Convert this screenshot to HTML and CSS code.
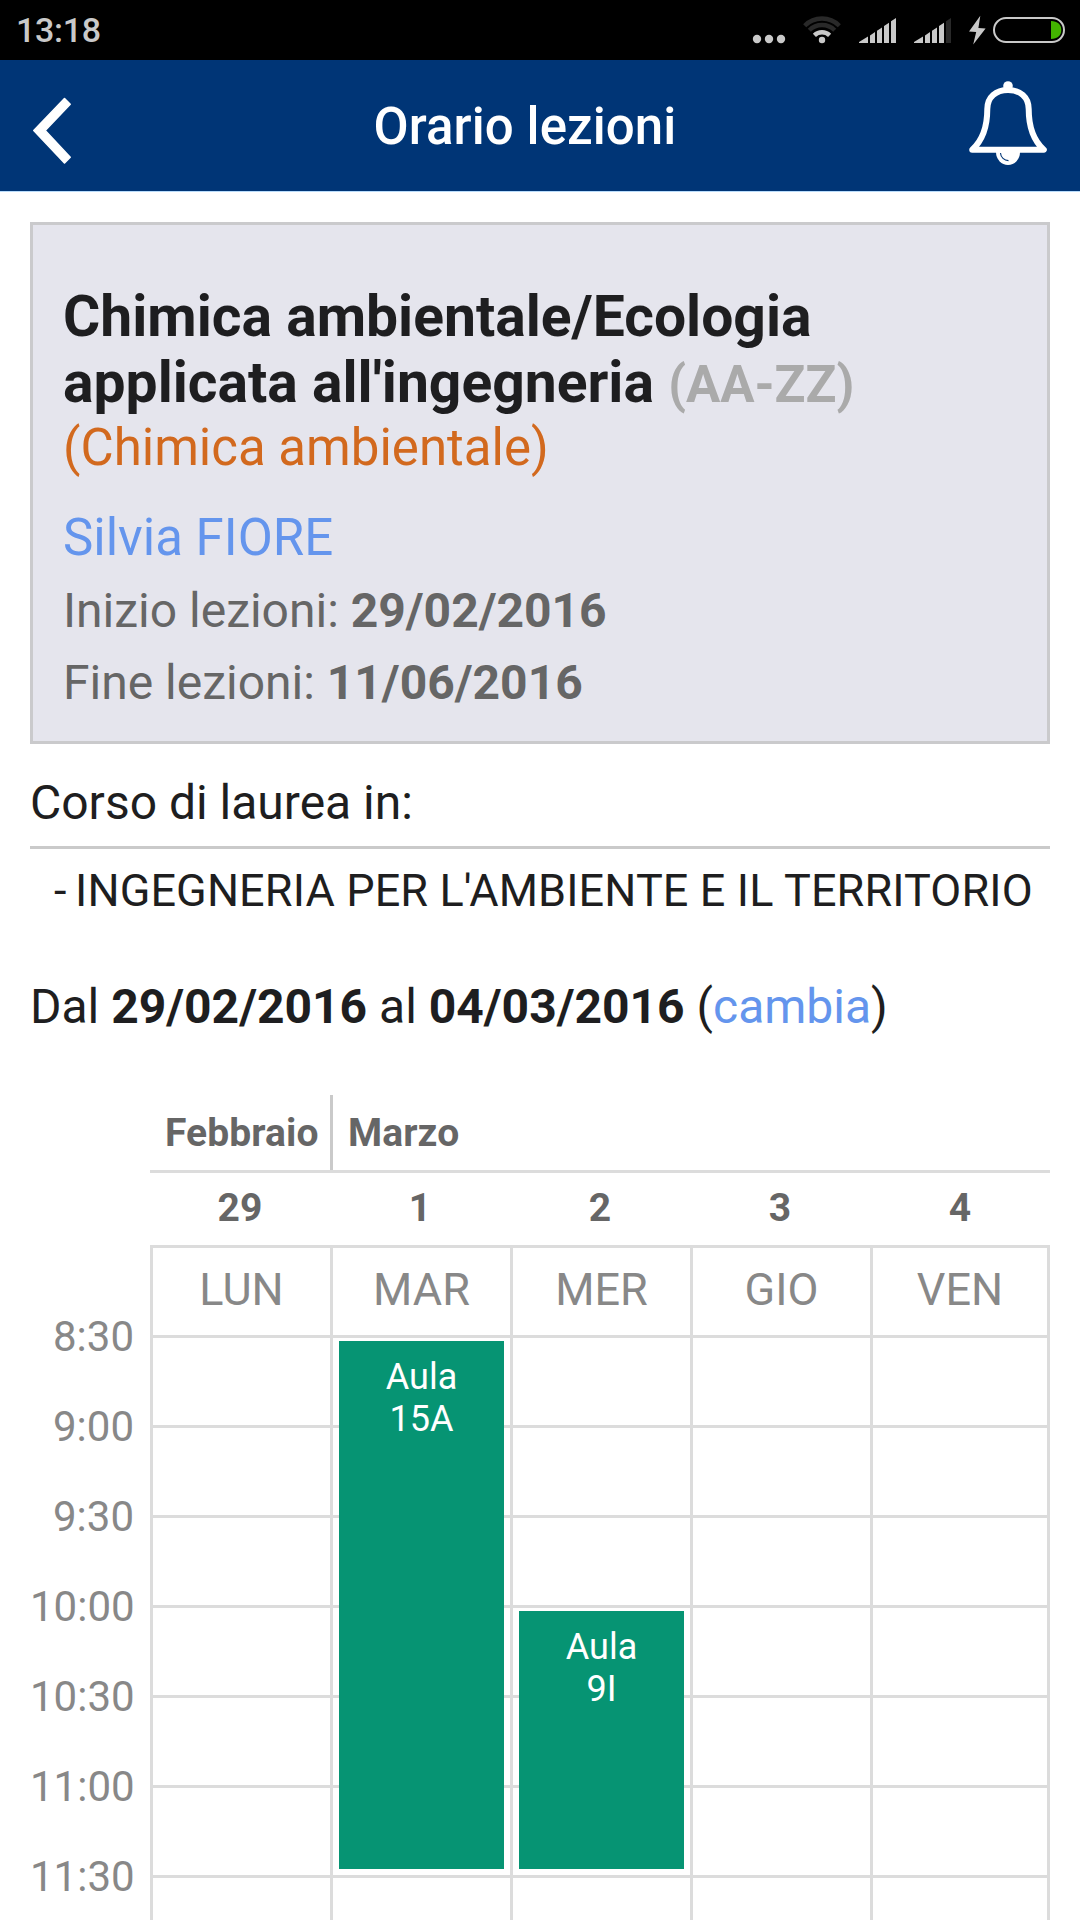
FILE: index.html
```html
<!DOCTYPE html>
<html lang="it">
<head>
<meta charset="utf-8">
<title>Orario lezioni</title>
<link rel="stylesheet" href="styles.css">
</head>
<body>
<div class="status-bar">
  <span class="clock">13:18</span>
  <svg class="status-icons" width="330" height="60" viewBox="750 0 330 60" aria-hidden="true">
    <g fill="#c9c9c9">
      <circle cx="757" cy="39" r="4.2"/><circle cx="769" cy="39" r="4.2"/><circle cx="781" cy="39" r="4.2"/>
      <circle cx="822" cy="40" r="3.2"/>
      <path d="M859 43v-1l9-5.5V43zM870 43v-7.6l5-3.4v11zM877 43V30.8l5-3.4V43zM884 43V26l5-3.3V43zM891 43V21.3l5-3.3v25z"/>
      <path d="M914 43v-1l9-5.5V43zM925 43v-7.6l5-3.4v11zM932 43V30.8l5-3.4V43zM939 43V26l5-3.3V43z"/>
      <path d="M980.3 15.7 969 31.5l7.2.6-3 12.4 12.4-16-7.2-.6z"/>
    </g>
    <path fill="#292929" d="M946 43V21.3l5-3.3v25z"/>
    <g fill="none" stroke-width="4.4">
      <path stroke="#c9c9c9" d="M814.4 35.4a10.8 10.8 0 0 1 15.2 0"/>
      <path stroke="#292929" d="M809.3 30.3a18 18 0 0 1 25.4 0M804.7 25.7a24.5 24.5 0 0 1 34.6 0"/>
    </g>
    <rect x="994" y="18" width="70" height="24" rx="12" fill="none" stroke="#c9c9c9" stroke-width="2"/>
    <path fill="#43b400" d="M1051 21c6.500 0 10.300 3.700 10.300 9s-3.800 9-10.300 9z"/>
  </svg>
</div>

<header class="app-bar">
  <a class="back" aria-label="Indietro">
    <svg width="135" height="131" viewBox="0 60 135 131">
      <path d="M64.500 98.500 33.800 130.500l30.700 32.500 5.700-5.700L45.200 130.500 70.200 104.200z" fill="#fff" stroke="#fff" stroke-width="1.600" stroke-linejoin="round"/>
    </svg>
  </a>
  <h1 class="title">Orario lezioni</h1>
  <a class="alerts" aria-label="Avvisi">
    <svg width="165" height="131" viewBox="915 60 165 131">
      <circle cx="1008" cy="86" r="4.800" fill="#fff"/>
      <path d="M972.200 149.700C983 140 987.300 126 987.300 109C987.300 97 996 90 1008 90S1028.700 97 1028.700 109C1028.700 126 1033 140 1043.800 149.700Z" fill="none" stroke="#fff" stroke-width="6" stroke-linejoin="round"/>
      <path d="M996 152a12 13 0 0 0 24 0z" fill="#fff"/>
      <path d="M1000.500 153a8 8 0 0 0 8 7.600" fill="none" stroke="#003576" stroke-width="1.100"/>
    </svg>
  </a>
</header>

<main class="content">
  <section class="course">
    <h2 class="course-name">Chimica ambientale/Ecologia applicata all'ingegneria <span class="range">(AA-ZZ)</span></h2>
    <p class="course-alias">(Chimica ambientale)</p>
    <p class="teacher">Silvia FIORE</p>
    <p class="period">Inizio lezioni: <b>29/02/2016</b></p>
    <p class="period">Fine lezioni: <b>11/06/2016</b></p>
  </section>

  <h3 class="degree-label">Corso di laurea in:</h3>
  <p class="degree"><span class="dash">-</span>INGEGNERIA PER L'AMBIENTE E IL TERRITORIO</p>

  <p class="week">Dal <b>29/02/2016</b> al <b>04/03/2016</b> (<a class="change">cambia</a>)</p>

  <section class="schedule">
    <div class="times">
      <span>8:30</span><span>9:00</span><span>9:30</span><span>10:00</span><span>10:30</span><span>11:00</span><span>11:30</span>
    </div>
    <div class="calendar">
      <div class="months"><span class="month">Febbraio</span><span class="month next">Marzo</span></div>
      <div class="dates"><span>29</span><span>1</span><span>2</span><span>3</span><span>4</span></div>
      <div class="grid">
        <div class="day lun">LUN</div><div class="day mar">MAR</div><div class="day mer">MER</div><div class="day gio">GIO</div><div class="day ven">VEN</div>
        <div class="line r1"></div><div class="line r2"></div><div class="line r3"></div><div class="line r4"></div><div class="line r5"></div><div class="line r6"></div><div class="line r7"></div>
        <div class="lesson tuesday">Aula<br>15A</div>
        <div class="lesson wednesday">Aula<br>9I</div>
      </div>
    </div>
  </section>
</main>
</body>
</html>
```
FILE: styles.css
```css
* { box-sizing: border-box; margin: 0; padding: 0; }

body {
  width: 1080px;
  height: 1920px;
  overflow: hidden;
  background: #fff;
  color: #1e1e20;
  font-family: Roboto, "Liberation Sans", sans-serif;
}

svg { display: block; }

.status-bar {
  display: flex;
  justify-content: space-between;
  height: 60px;
  padding-left: 16px;
  background: #000;
}
.clock {
  padding-top: 10px;
  color: #c9c9c9;
  font-size: 34px;
  font-weight: 500;
  line-height: 40px;
  letter-spacing: -0.3px;
}

.app-bar {
  display: flex;
  height: 132px;
  background: #003576;
  border-bottom: 1px solid #b9dcfb;
}
.title {
  flex: 1;
  padding-top: 37px;
  color: #fff;
  font-size: 51px;
  font-weight: 500;
  line-height: 59px;
  letter-spacing: 0.08px;
  text-align: center;
  white-space: nowrap;
}

.content { padding: 30px 30px 0; }

.course {
  height: 522px;
  padding: 59px 30px 22px;
  background: #e5e5ed;
  border: 3px solid #cacacc;
}
.course-name { font-size: 57px; font-weight: 700; line-height: 66px; }
.range { color: #aaa; font-size: 51px; line-height: 1; }
.course-alias { margin-top: 2px; color: #d2691e; font-size: 51px; line-height: 60px; }
.teacher { margin: 30px 0 7px; color: #6495ed; font-size: 51px; line-height: 60px; }
.period { color: #666; font-size: 48px; line-height: 72px; }

.degree-label {
  margin-top: 30px;
  padding-bottom: 15px;
  border-bottom: 3px solid #cacaca;
  font-size: 48px;
  font-weight: 400;
  line-height: 57px;
}
.degree {
  display: flex;
  gap: 8.5px;
  margin-top: 15px;
  padding-left: 24px;
  font-size: 45px;
  line-height: 54px;
  letter-spacing: 0.12px;
  white-space: nowrap;
}
.week { margin-top: 60px; font-size: 48px; line-height: 57px; }
.change { color: #6495ed; }

.schedule { display: flex; margin-top: 60px; }
.times {
  display: flex;
  flex-direction: column;
  width: 120px;
  padding: 197px 16px 0 0;
  color: #888;
  font-size: 42px;
  line-height: 90px;
  text-align: right;
}
.calendar { width: 900px; }
.months {
  display: flex;
  height: 78px;
  border-bottom: 3px solid #dcdcdc;
}
.month {
  width: 180px;
  padding: 15px 0 0 15px;
  color: #666;
  font-size: 39px;
  font-weight: 700;
  line-height: 46px;
  letter-spacing: 0.1px;
}
.next { flex: 1; border-left: 3px solid #cacaca; }
.dates {
  display: grid;
  grid-template-columns: repeat(5, 180px);
  height: 72px;
  color: #666;
  font-size: 39px;
  font-weight: 700;
  line-height: 70px;
  text-align: center;
}

.grid {
  display: grid;
  grid-template-columns: repeat(5, 180px);
  grid-template-rows: repeat(8, 90px);
}
.day {
  grid-row: 1 / 9;
  border: solid #dcdcdc;
  border-width: 3px 0 0 3px;
  color: #888;
  font-size: 45px;
  line-height: 83px;
  text-align: center;
}
.lun { grid-column: 1; }
.mar { grid-column: 2; }
.mer { grid-column: 3; }
.gio { grid-column: 4; }
.ven { grid-column: 5; border-right-width: 3px; }
.line { grid-column: 1 / 6; border-top: 3px solid #dcdcdc; }
.r1 { grid-row: 2; }
.r2 { grid-row: 3; }
.r3 { grid-row: 4; }
.r4 { grid-row: 5; }
.r5 { grid-row: 6; }
.r6 { grid-row: 7; }
.r7 { grid-row: 8; }
.lesson {
  margin: 6px 6px 6px 9px;
  padding-top: 15px;
  background: #069473;
  color: #fff;
  font-size: 36px;
  line-height: 42px;
  text-align: center;
}
.tuesday { grid-area: 2 / 2 / 8 / 3; }
.wednesday { grid-area: 5 / 3 / 8 / 4; }
```
